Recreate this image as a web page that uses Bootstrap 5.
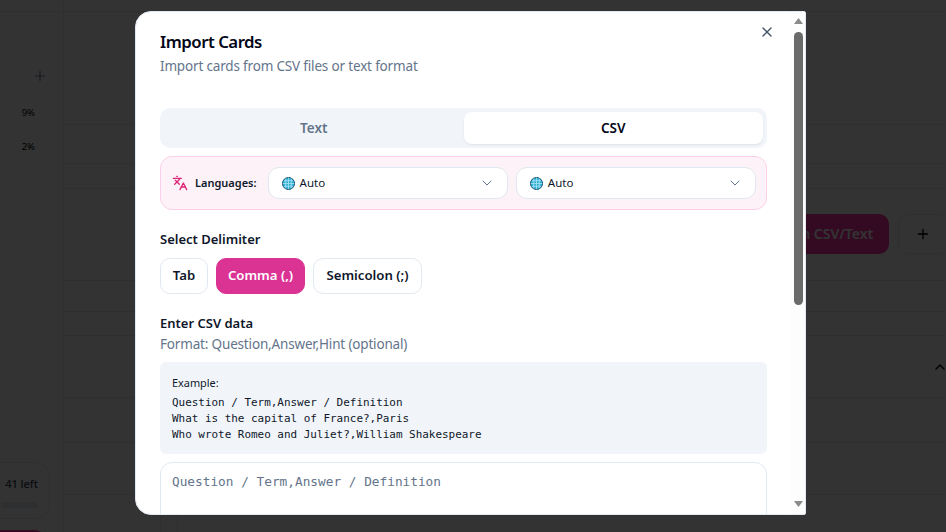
<!DOCTYPE html>
<html lang="en">
<head>
<meta charset="utf-8">
<title>Import Cards</title>
<link href="https://cdn.jsdelivr.net/npm/bootstrap@5.3.0/dist/css/bootstrap.min.css" rel="stylesheet">
<style>
html,body{height:100%;overflow:hidden;background:#fff;font-family:"Noto Sans",sans-serif;color:#0f172a}
.page-shell{height:532px;width:946px;overflow:hidden}
.side-rail{width:64px;flex:none;border-right:1px solid #e2e8f0;overflow:hidden;display:flex;flex-direction:column}
.rail-top{height:12px;border-bottom:1px solid #e2e8f0;flex:none}
.rail-plus{height:72px;padding-right:15px;flex:none}
.rail-pct{font-size:9.500px;color:#000;height:34px;padding-right:28px;flex:none;line-height:35px;text-align:right}
.rail-pct-first{margin-top:11px}
.rail-left{margin-top:299px;margin-left:-20px;width:70px;height:57px;border:1px solid #e2e8f0;border-radius:14px;font-size:11px;font-weight:500;padding:13px 11px 0 0;text-align:right;flex:none;color:#334155}
.rail-bar{display:block;height:6px;background:#e2e8f0;border-radius:3px;margin:9px 0 0 20px}
.rail-pink{margin-top:11px;margin-left:-20px;width:65px;height:20px;background:#ff34a8;border-radius:10px;flex:none}
.main-area{flex:1;min-width:0;overflow:hidden;display:flex;flex-direction:column}
.line-row{border-bottom:1px solid #e2e8f0;flex:none}
.h-a{height:12px}.h-b{height:113px}.h-c{height:39px}.h-d{height:25px}.h-e{height:92px}.h-f{height:31px}.h-g{height:24px}.h-h{height:62px}.h-i{height:45px}.h-j{height:52px}
.under-actions{display:flex;justify-content:flex-end;align-items:center;gap:9px;padding-bottom:2px;margin-right:-4px}
.under-pink{width:180px;height:40px;border-radius:10px;background:#ff34a8;color:#fff;font-size:14px;font-weight:600;padding:0 15px 0 16px;border:0}
.under-plus{width:52px;height:40px;border-radius:10px;border:1px solid #e2e8f0;background:#fff;color:#000;padding:0}
.under-chev{display:flex;justify-content:flex-end;align-items:center;height:100%;margin-right:-2px}
.under-cols{margin-left:96px;width:18px;height:37px;border-left:1px solid #e2e8f0;border-right:1px solid #e2e8f0;flex:none}

.modal-backdrop.show{opacity:.8;background:#000}
.modal.show-modal{display:block;overflow:hidden}
.import-dialog{width:671px;max-width:671px;margin:11px 0 0 135px;pointer-events:auto}
.import-sheet{height:504px;overflow:hidden;border:1px solid #e2e8f0;border-radius:16px 2px 2px 16px;background:#fff;display:block;padding:18px 38px 0 24px;position:relative}
.fake-bar{position:absolute;top:0;right:0;bottom:0;width:15px;background:#fdfdfd;display:flex;flex-direction:column;align-items:flex-end;padding-right:2px}
.bar-up,.bar-down{width:9px;height:20px;flex:none;display:flex;justify-content:center;color:#8a8a8a}
.bar-up{align-items:flex-start;padding-top:6px}
.bar-down{align-items:flex-end;padding-bottom:7px;margin-top:auto}
.bar-thumb{width:9px;height:273px;background:#6a6a6a;border-radius:5px;flex:none}
.close-x{position:absolute;top:8px;right:26px;width:24px;height:24px;padding:0;border:0;background:none;color:#475569;display:flex;align-items:center;justify-content:center}
.sheet-title{font-size:16.800px;font-weight:600;line-height:24px;margin:0;color:#020617;letter-spacing:-.5px}
.sheet-sub{font-size:13.500px;letter-spacing:-.17px;color:#64748b;line-height:20px;margin:2px 0 0}
.tab-track{margin-top:32px;background:#f1f5f9;border-radius:10px;padding:4px;display:grid;grid-template-columns:1fr 1fr}
.tab-track .nav-link{height:32px;padding:0;font-size:13.500px;font-weight:600;color:#64748b;border-radius:8px;background:none;border:0}
.tab-track .nav-link.active{background:#fff;color:#020617;box-shadow:0 1px 2px rgba(15,23,42,.08)}
.lang-box{margin-top:8px;height:54px;background:#fdf2f8;border:1px solid #fbcfe8;border-radius:12px;padding:0 10px 0 11px;display:flex;align-items:center}
.lang-ico{color:#db2777;flex:none;width:16px;height:16px}
.lang-label{font-size:11px;font-weight:600;color:#0f172a;margin:0 11px 0 7px;flex:none}
.lang-pick{flex:1 1 0;height:32px;background:#fff;border:1px solid #e2e8f0;border-radius:11px;padding:0 12px 0 13px;display:flex;align-items:center;justify-content:space-between;font-size:11.500px;color:#0f172a}
.lang-pick+.lang-pick{margin-left:8px}
.pick-val{display:flex;align-items:center;gap:5px}
.pick-chev{color:#64748b}
.sect-label{font-size:13px;font-weight:600;color:#0f172a;line-height:20px;margin:0}
.sect-a{margin-top:19px}
.delim-row{margin-top:9px;display:flex;gap:8px}
.delim-btn{height:36px;padding:0;font-size:13.200px;font-weight:600;border:1px solid #e2e8f0;border-radius:10px;background:#fff;color:#0f172a;line-height:1}
.delim-btn.picked{background:#db3394;border-color:#db3394;color:#fff}
.w-tab{width:48px}.w-comma{width:89px}.w-semi{width:109px}
.sect-b{margin-top:19px}
.format-hint{font-size:13.500px;letter-spacing:-.17px;color:#64748b;line-height:20px;margin:1px 0 0}
.example-box{margin-top:8px;height:92px;background:#f1f5f9;border-radius:6px;padding:12px 12px 0;color:#0f172a}
.example-head{font-size:10.900px;line-height:18px}
.example-code{font-family:"DejaVu Sans Mono","Liberation Mono",monospace;font-size:10.950px;line-height:16px;margin:3px 0 0;white-space:pre;color:#0f172a;overflow:visible}
.csv-input{display:block;width:100%;height:324px;margin-top:8px;border:1px solid #e2e8f0;border-radius:12px;padding:9px 11px;font-family:"DejaVu Sans Mono","Liberation Mono",monospace;font-size:12.770px;resize:none;outline:0}
.csv-input::placeholder{color:#64748b;opacity:1}
</style>
</head>
<body>
<div class="page-shell d-flex">
  <aside class="side-rail">
    <div class="rail-top"></div>
    <div class="rail-plus d-flex justify-content-end align-items-end">
      <svg width="16" height="16" viewBox="0 0 24 24" fill="none" stroke="#64748b" stroke-width="1.500" stroke-linecap="round"><path d="M5 12h14M12 5v14"/></svg>
    </div>
    <div class="rail-pct rail-pct-first">9%</div>
    <div class="rail-pct">2%</div>
    <div class="rail-left">41 left<span class="rail-bar"></span></div>
    <div class="rail-pink"></div>
  </aside>
  <main class="main-area">
    <div class="line-row h-a"></div>
    <div class="line-row h-b"></div>
    <div class="line-row h-c"></div>
    <div class="line-row h-d"></div>
    <div class="line-row h-e under-actions">
      <button class="under-pink btn">Import from CSV/Text</button>
      <button class="under-plus btn d-flex align-items-center"><svg class="under-plus-ico ms-3" width="16" height="16" viewBox="0 0 24 24" fill="none" stroke="#000" stroke-width="2" stroke-linecap="round"><path d="M5 12h14M12 5v14"/></svg></button>
    </div>
    <div class="line-row h-f"></div>
    <div class="line-row h-g"></div>
    <div class="line-row h-h"><div class="under-chev"><svg width="16" height="16" viewBox="0 0 24 24" fill="none" stroke="#000" stroke-width="2" stroke-linecap="round" stroke-linejoin="round"><path d="m18 15-6-6-6 6"/></svg></div></div>
    <div class="line-row h-i"></div>
    <div class="line-row h-j"></div>
    <div class="under-cols"></div>
  </main>
</div>

<div class="modal-backdrop show"></div>
<div class="modal show-modal" role="dialog" aria-modal="true">
  <div class="modal-dialog import-dialog">
    <div class="modal-content import-sheet">
      <button class="close-x" type="button" aria-label="Close">
        <svg width="16" height="16" viewBox="0 0 24 24" fill="none" stroke="currentColor" stroke-width="2" stroke-linecap="round" stroke-linejoin="round"><path d="M18 6 6 18"/><path d="m6 6 12 12"/></svg>
      </button>
      <h2 class="sheet-title">Import Cards</h2>
      <p class="sheet-sub">Import cards from CSV files or text format</p>

      <div class="nav tab-track" role="tablist">
        <button class="nav-link" type="button">Text</button>
        <button class="nav-link active" type="button">CSV</button>
      </div>

      <div class="lang-box">
        <svg class="lang-ico" viewBox="0 0 24 24" fill="none" stroke="currentColor" stroke-width="2" stroke-linecap="round" stroke-linejoin="round"><path d="m5 8 6 6"/><path d="m4 14 6-6 2-3"/><path d="M2 5h12"/><path d="M7 2h1"/><path d="m22 22-5-10-5 10"/><path d="M14 18h6"/></svg>
        <span class="lang-label">Languages:</span>
        <div class="lang-pick">
          <span class="pick-val">
            <svg width="13" height="13" viewBox="0 0 14 14"><circle cx="7" cy="7" r="6.500" fill="#35b4d8" stroke="#16506e" stroke-width="1"/><path d="M1 7h12M2 4h10M2 10h10M7 1v12M4 1.800v10.400M10 1.800v10.400" stroke="#bfeaf5" stroke-width=".7" fill="none"/></svg>
            Auto
          </span>
          <svg class="pick-chev" width="16" height="16" viewBox="0 0 24 24" fill="none" stroke="currentColor" stroke-width="1.500" stroke-linecap="round" stroke-linejoin="round"><path d="m6 9 6 6 6-6"/></svg>
        </div>
        <div class="lang-pick">
          <span class="pick-val">
            <svg width="13" height="13" viewBox="0 0 14 14"><circle cx="7" cy="7" r="6.500" fill="#35b4d8" stroke="#16506e" stroke-width="1"/><path d="M1 7h12M2 4h10M2 10h10M7 1v12M4 1.800v10.400M10 1.800v10.400" stroke="#bfeaf5" stroke-width=".7" fill="none"/></svg>
            Auto
          </span>
          <svg class="pick-chev" width="16" height="16" viewBox="0 0 24 24" fill="none" stroke="currentColor" stroke-width="1.500" stroke-linecap="round" stroke-linejoin="round"><path d="m6 9 6 6 6-6"/></svg>
        </div>
      </div>

      <p class="sect-label sect-a">Select Delimiter</p>
      <div class="delim-row">
        <button class="btn delim-btn w-tab" type="button">Tab</button>
        <button class="btn delim-btn picked w-comma" type="button">Comma (,)</button>
        <button class="btn delim-btn w-semi" type="button">Semicolon (;)</button>
      </div>

      <p class="sect-label sect-b">Enter CSV data</p>
      <p class="format-hint">Format: Question,Answer,Hint (optional)</p>

      <div class="example-box">
        <div class="example-head">Example:</div>
        <pre class="example-code">Question / Term,Answer / Definition
What is the capital of France?,Paris
Who wrote Romeo and Juliet?,William Shakespeare</pre>
      </div>

      <textarea class="csv-input" placeholder="Question / Term,Answer / Definition"></textarea>

      <div class="fake-bar" aria-hidden="true">
        <span class="bar-up"><svg width="9" height="6" viewBox="0 0 9 6"><path d="M4.500 0 9 6H0z" fill="currentColor"/></svg></span>
        <span class="bar-thumb"></span>
        <span class="bar-down"><svg width="9" height="6" viewBox="0 0 9 6"><path d="M0 0h9L4.500 6z" fill="currentColor"/></svg></span>
      </div>
    </div>
  </div>
</div>
</body>
</html>
